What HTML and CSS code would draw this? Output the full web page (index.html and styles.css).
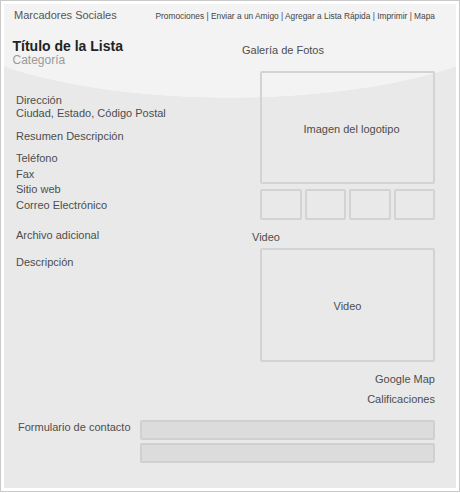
FILE: index.html
```html
<!DOCTYPE html>
<html lang="es">
<head>
<meta charset="utf-8">
<title>Listado</title>
<link rel="stylesheet" href="styles.css">
</head>
<body>
<div class="frame">
  <div class="panel">
    <div class="topbar">
      <span class="social">Marcadores Sociales</span>
      <span class="nav">Promociones | Enviar a un Amigo | Agregar a Lista Rápida | Imprimir | Mapa</span>
    </div>
    <div class="main">
      <div class="left">
        <div class="title">Título de la Lista</div>
        <div class="category">Categoría</div>
        <div class="address">
          <div class="label">Dirección</div>
          <div class="label">Ciudad, Estado, Código Postal</div>
        </div>
        <div class="label summary">Resumen Descripción</div>
        <div class="contact">
          <div>Teléfono</div>
          <div>Fax</div>
          <div>Sitio web</div>
          <div>Correo Electrónico</div>
        </div>
        <div class="label extra">Archivo adicional</div>
        <div class="label desc">Descripción</div>
      </div>
      <div class="right">
        <div class="label gallery">Galería de Fotos</div>
        <div class="box logo">Imagen del logotipo</div>
        <div class="thumbs">
          <div class="box"></div>
          <div class="box"></div>
          <div class="box"></div>
          <div class="box"></div>
        </div>
        <div class="label video-label">Video</div>
        <div class="box video">Video</div>
        <div class="label map">Google Map</div>
        <div class="label ratings">Calificaciones</div>
      </div>
    </div>
    <div class="form">
      <div class="label form-label">Formulario de contacto</div>
      <div class="inputs">
        <div class="input"></div>
        <div class="input"></div>
      </div>
    </div>
  </div>
</div>
</body>
</html>
```
FILE: styles.css
```css
* { box-sizing: border-box; }
html, body { margin: 0; padding: 0; background: #ffffff; }
body {
  font-family: "Liberation Sans", Arial, sans-serif;
  font-size: 11px;
  line-height: 13px;
  color: #4d4d4d;
}
.frame {
  width: 460px;
  height: 492px;
  border: 1px solid #c9c9c9;
  padding: 3px;
  background: #ffffff;
}
.panel {
  height: 484px;
  padding: 5px 21px 0 0;
  background: radial-gradient(304px 94px at 226px 0, #f3f3f3 99.4%, #e9e9e9 100%);
}
.topbar {
  display: flex;
  justify-content: space-between;
  align-items: baseline;
  height: 13px;
}
.social {
  margin-left: 10px;
  color: #555555;
}
.nav {
  font-size: 8.35px;
  color: #444444;
}
.main {
  display: flex;
  margin-top: 17px;
}
.left {
  flex: 1;
  padding-left: 12px;
}
.title {
  margin-left: -3.5px;
  font-size: 14px;
  line-height: 15px;
  font-weight: bold;
  color: #222222;
}
.category {
  margin-left: -3.5px;
  font-size: 12px;
  line-height: 13px;
  color: #9a9a9a;
}
.label { line-height: 13px; }
.address { margin-top: 27px; }
.summary { margin-top: 10px; }
.contact {
  margin-top: 8px;
  line-height: 15.7px;
}
.extra { margin-top: 15px; }
.desc { margin-top: 14px; }
.right {
  width: 193px;
  display: flex;
  flex-direction: column;
}
.gallery { margin-top: 5px; }
.box {
  border: 2px solid #d3d3d3;
  border-radius: 2px;
}
.logo {
  margin: 14px 0 0 18px;
  height: 113px;
  padding: 50px 0 0 8px;
  text-align: center;
}
.thumbs {
  margin: 5px 0 0 18px;
  display: grid;
  grid-template-columns: repeat(4, 1fr);
  gap: 3px;
  height: 31px;
}
.video-label {
  margin: 11.4px 0 0 10px;
}
.video {
  margin: 3.6px 0 0 18px;
  height: 114px;
  padding-top: 4px;
  display: flex;
  align-items: center;
  justify-content: center;
}
.map {
  margin-top: 10.7px;
  text-align: right;
}
.ratings {
  margin-top: 7px;
  text-align: right;
}
.form {
  display: flex;
  margin-top: 14.3px;
  padding-left: 14px;
}
.form-label {
  width: 122px;
  margin-top: 1.4px;
}
.inputs {
  flex: 1;
  display: flex;
  flex-direction: column;
  gap: 3px;
}
.input {
  height: 20px;
  background: #dcdcdc;
  border: 2px solid #d0d0d0;
  border-radius: 2px;
}
```
